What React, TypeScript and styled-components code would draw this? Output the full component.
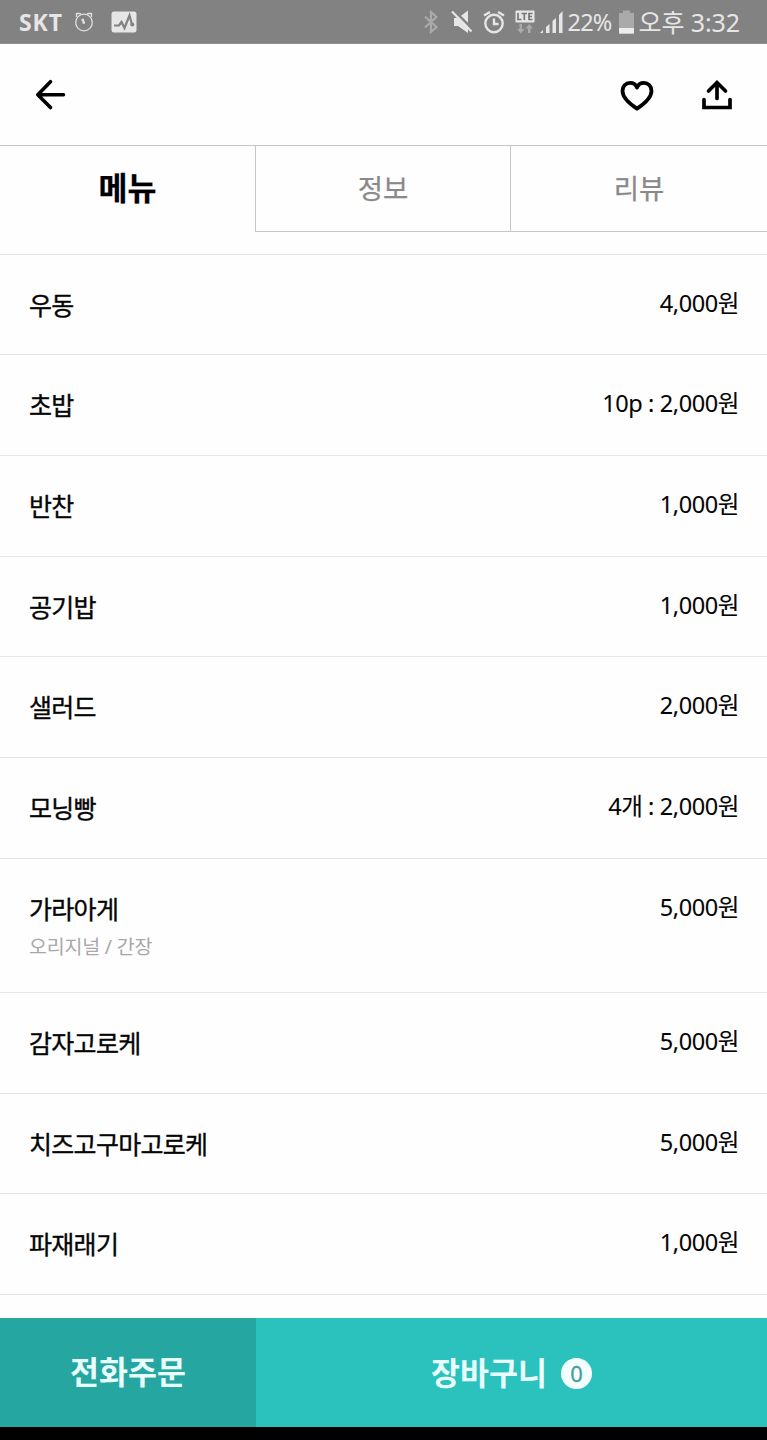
import React from 'react';
import styled, { createGlobalStyle } from 'styled-components';

const GlobalStyle = createGlobalStyle`
  * { box-sizing: border-box; }
  body {
    margin: 0;
    background: #fefefe;
    font-family: 'Noto Sans', 'Noto Sans CJK KR', sans-serif;
  }
  button { font-family: inherit; border: 0; padding: 0; background: none; }
  svg { display: block; flex: none; }
`;

const Screen = styled.div`
  width: 767px;
  height: 1440px;
  display: flex;
  flex-direction: column;
  overflow: hidden;
  background: #fefefe;
  color: #050505;
`;

const StatusBar = styled.header`
  height: 44px;
  flex: none;
  display: flex;
  justify-content: space-between;
  padding: 0 27px 0 19px;
  background: #828282;
  border-bottom: 1px solid #8f8f8f;
  color: #e6e6e6;
`;

const StatusGroup = styled.div`
  display: flex;
  align-items: center;
`;

const StatusText = styled.span<{ $size: number; $bold?: boolean; $ml?: number; $ls?: number }>`
  font-size: ${p => p.$size}px;
  font-weight: ${p => (p.$bold ? 700 : 400)};
  line-height: 44px;
  white-space: nowrap;
  margin-left: ${p => p.$ml ?? 0}px;
  letter-spacing: ${p => p.$ls ?? 0}px;
`;

const StatusIcon = styled.svg<{ $ml: number }>`
  margin-left: ${p => p.$ml}px;
`;

const AppBar = styled.nav`
  height: 101px;
  flex: none;
  display: flex;
  align-items: center;
  padding: 1px 34px 0 34px;
`;

const IconButton = styled.button<{ $push?: boolean; $ml?: number }>`
  margin-left: ${p => (p.$push ? 'auto' : `${p.$ml ?? 0}px`)};
  color: #000;
`;

const Tabs = styled.div`
  height: 87px;
  flex: none;
  display: grid;
  grid-template-columns: 255px 255px 257px;
  border-top: 1px solid #c6c6c6;
`;

const Tab = styled.button<{ $active?: boolean }>`
  padding-bottom: ${p => (p.$active ? 2 : 0)}px;
  border-left: ${p => (p.$active ? '0' : '1px solid #c6c6c6')};
  border-bottom: ${p => (p.$active ? '0' : '1px solid #c6c6c6')};
  color: ${p => (p.$active ? '#000' : '#898989')};
  font-size: ${p => (p.$active ? 31.5 : 27.5)}px;
  font-weight: ${p => (p.$active ? 700 : 400)};
  line-height: 40px;
  -webkit-text-stroke: 0.25px currentColor;
`;

const Menu = styled.ul`
  list-style: none;
  margin: 21.7px 0 0;
  padding: 0;
  flex: 1;
  border-top: 1px solid #e6e6e6;
`;

const MenuRow = styled.li<{ $tall?: boolean }>`
  height: ${p => (p.$tall ? 134.1 : 100.7)}px;
  display: flex;
  justify-content: space-between;
  align-items: flex-start;
  padding: 32px 28px 0 29px;
  border-bottom: 1px solid #e6e6e6;
`;

const Name = styled.div`
  font-size: 25px;
  line-height: 36px;
  letter-spacing: -0.7px;
  -webkit-text-stroke: 0.35px currentColor;
`;

const Note = styled.div`
  margin-top: 3px;
  font-size: 19.5px;
  line-height: 34px;
  letter-spacing: -0.2px;
  color: #a8a8a8;
`;

const Price = styled.div`
  font-size: 23.5px;
  line-height: 33px;
  letter-spacing: -0.4px;
  white-space: nowrap;
  -webkit-text-stroke: 0.1px currentColor;
`;

const Footer = styled.footer`
  height: 109px;
  flex: none;
  display: grid;
  grid-template-columns: 256px 1fr;
`;

const FooterButton = styled.button<{ $dark?: boolean }>`
  display: flex;
  align-items: center;
  justify-content: center;
  gap: 14px;
  background: ${p => (p.$dark ? '#26a6a0' : '#2bc1bd')};
  color: #e9ffff;
  font-size: 31.5px;
  font-weight: 700;
`;

const FooterLabel = styled.span<{ $lift: number }>`
  padding-bottom: ${p => p.$lift}px;
`;

const CountBadge = styled.span`
  width: 31px;
  height: 31px;
  margin-top: 2px;
  border-radius: 50%;
  display: flex;
  align-items: center;
  justify-content: center;
  background: #f4ffff;
  color: #4c9c9b;
  font-size: 22px;
  font-weight: 400;
  line-height: 31px;
  -webkit-text-stroke: 0.3px currentColor;
`;

const NavStrip = styled.div`
  height: 13px;
  flex: none;
  background: #000;
`;

const items: { name: string; price: string; note?: string }[] = [
  { name: '우동', price: '4,000원' },
  { name: '초밥', price: '10p : 2,000원' },
  { name: '반찬', price: '1,000원' },
  { name: '공기밥', price: '1,000원' },
  { name: '샐러드', price: '2,000원' },
  { name: '모닝빵', price: '4개 : 2,000원' },
  { name: '가라아게', price: '5,000원', note: '오리지널 / 간장' },
  { name: '감자고로케', price: '5,000원' },
  { name: '치즈고구마고로케', price: '5,000원' },
  { name: '파재래기', price: '1,000원' },
];

export default function App() {
  return (
    <Screen>
      <GlobalStyle />
      <StatusBar>
        <StatusGroup>
          <StatusText $size={23} $bold $ls={0.9}>SKT</StatusText>
          <StatusIcon $ml={11} width="20" height="22" viewBox="0 0 20 22" fill="none" stroke="#e0e0e0" strokeWidth="1.3">
            <circle cx="10" cy="11.5" r="8.3" />
            <path d="M2.5 6V2.5H5Q6.5 2.5 7 3.5M17.5 6V2.5H15Q13.5 2.5 13 3.5" />
            <path d="M7.5 9H10M8.5 11.5H11" strokeWidth="2.6" />
          </StatusIcon>
          <StatusIcon $ml={17} width="26" height="22" viewBox="0 0 26 22">
            <rect x="0.5" y="0.5" width="25" height="21" rx="2.5" fill="#e6e6e6" />
            <path d="M3 14.5H8L10.5 11L13.5 17L18.5 4.5L21 13.5" fill="none" stroke="#828282" strokeWidth="2.2" />
            <circle cx="21.3" cy="13.5" r="2" fill="#828282" />
          </StatusIcon>
        </StatusGroup>
        <StatusGroup>
          <StatusIcon $ml={0} width="14" height="24" viewBox="0 0 14 24" fill="none" stroke="#aaa" strokeWidth="2.2">
            <path d="M1 6.5L12.5 17L7 22V2L12.5 7L1 17.5" />
          </StatusIcon>
          <StatusIcon $ml={13} width="22" height="24" viewBox="0 0 22 24">
            <path d="M3 8H7L17 0.5V23L7 16H3Z" fill="#e6e6e6" />
            <path d="M2.5 0L23.5 21" stroke="#828282" strokeWidth="2.5" />
            <path d="M1 1.5L20.5 21.5" stroke="#e6e6e6" strokeWidth="2.2" />
          </StatusIcon>
          <StatusIcon $ml={10} width="22" height="24" viewBox="0 0 22 24" fill="none" stroke="#e6e6e6" strokeWidth="2.4">
            <circle cx="11" cy="13.5" r="8.7" />
            <path d="M11 8.5V14H15.5M1 5.5L7 2M21 5.5L15 2" />
          </StatusIcon>
          <StatusIcon $ml={10} width="20" height="24" viewBox="0 0 20 24">
            <rect x="0.5" y="0.5" width="19" height="12" rx="1" fill="#e6e6e6" />
            <path d="M3 3V9.5H6.5M6.5 3.5H12M9.3 3.5V10M17.5 3.5H14V9.5H17.5M14 6.5H17" fill="none" stroke="#777" strokeWidth="1.7" />
            <path d="M4.5 14H7V19H9.5L5.75 23.5L2 19H4.5ZM13 23V18.5H10.5L14.25 14L18 18.5H15.5V23Z" fill="#aaa" />
          </StatusIcon>
          <StatusIcon $ml={5} width="24" height="24" viewBox="0 0 24 24" fill="#e6e6e6">
            <path d="M0 23L3 20V23ZM6 23V17L9.5 14V23ZM12.5 23V11L16 8V23ZM19 23V5L22.5 1V23Z" />
          </StatusIcon>
          <StatusText $size={23.5} $ml={4} $ls={-0.8}>22%</StatusText>
          <StatusIcon $ml={7} width="15" height="24" viewBox="0 0 15 24">
            <path d="M0 3H4V0.5H11V3H15V24H0Z" fill="#aaa" />
            <path d="M0 18H15V22.5Q15 23.5 14 23.5H1Q0 23.5 0 22.5Z" fill="#ececec" />
          </StatusIcon>
          <StatusText $size={25} $ml={5} $ls={-0.1}>오후 3:32</StatusText>
        </StatusGroup>
      </StatusBar>

      <AppBar>
        <IconButton aria-label="back">
          <svg width="32" height="32" viewBox="0 0 32 32" fill="none" stroke="currentColor" strokeWidth="3.6" strokeLinecap="round" strokeLinejoin="round">
            <path d="M16.5 2.7L3.8 15.7L16.5 28.5M3.8 15.7H29.5" />
          </svg>
        </IconButton>
        <IconButton aria-label="like" $push>
          <svg width="34" height="32" viewBox="0 0 34 32" fill="none" stroke="currentColor" strokeWidth="3.8" strokeLinejoin="round">
            <path d="M17 29.7C10 25 2.5 19 2.5 12C2.5 7 6 3.8 10 3.8C13.5 3.8 16 5.7 17 8.5C18 5.7 20.5 3.8 24 3.8C28 3.8 31.5 7 31.5 12C31.5 19 24 25 17 29.7Z" />
          </svg>
        </IconButton>
        <IconButton aria-label="share" $ml={47}>
          <svg width="32" height="32" viewBox="0 0 32 32" fill="none" stroke="currentColor" strokeWidth="3.7" strokeLinecap="round">
            <path d="M3 20.5V28.5H29V20.5" />
            <path d="M16 19.5V3.8M7.5 12L16 3.5L24.5 12" />
          </svg>
        </IconButton>
      </AppBar>

      <Tabs>
        <Tab $active>메뉴</Tab>
        <Tab>정보</Tab>
        <Tab>리뷰</Tab>
      </Tabs>

      <Menu>
        {items.map(item => (
          <MenuRow key={item.name} $tall={!!item.note}>
            <div>
              <Name>{item.name}</Name>
              {item.note && <Note>{item.note}</Note>}
            </div>
            <Price>{item.price}</Price>
          </MenuRow>
        ))}
      </Menu>

      <Footer>
        <FooterButton $dark>
          <FooterLabel $lift={6}>전화주문</FooterLabel>
        </FooterButton>
        <FooterButton>
          <FooterLabel $lift={3}>장바구니</FooterLabel>
          <CountBadge>0</CountBadge>
        </FooterButton>
      </Footer>
      <NavStrip />
    </Screen>
  );
}
